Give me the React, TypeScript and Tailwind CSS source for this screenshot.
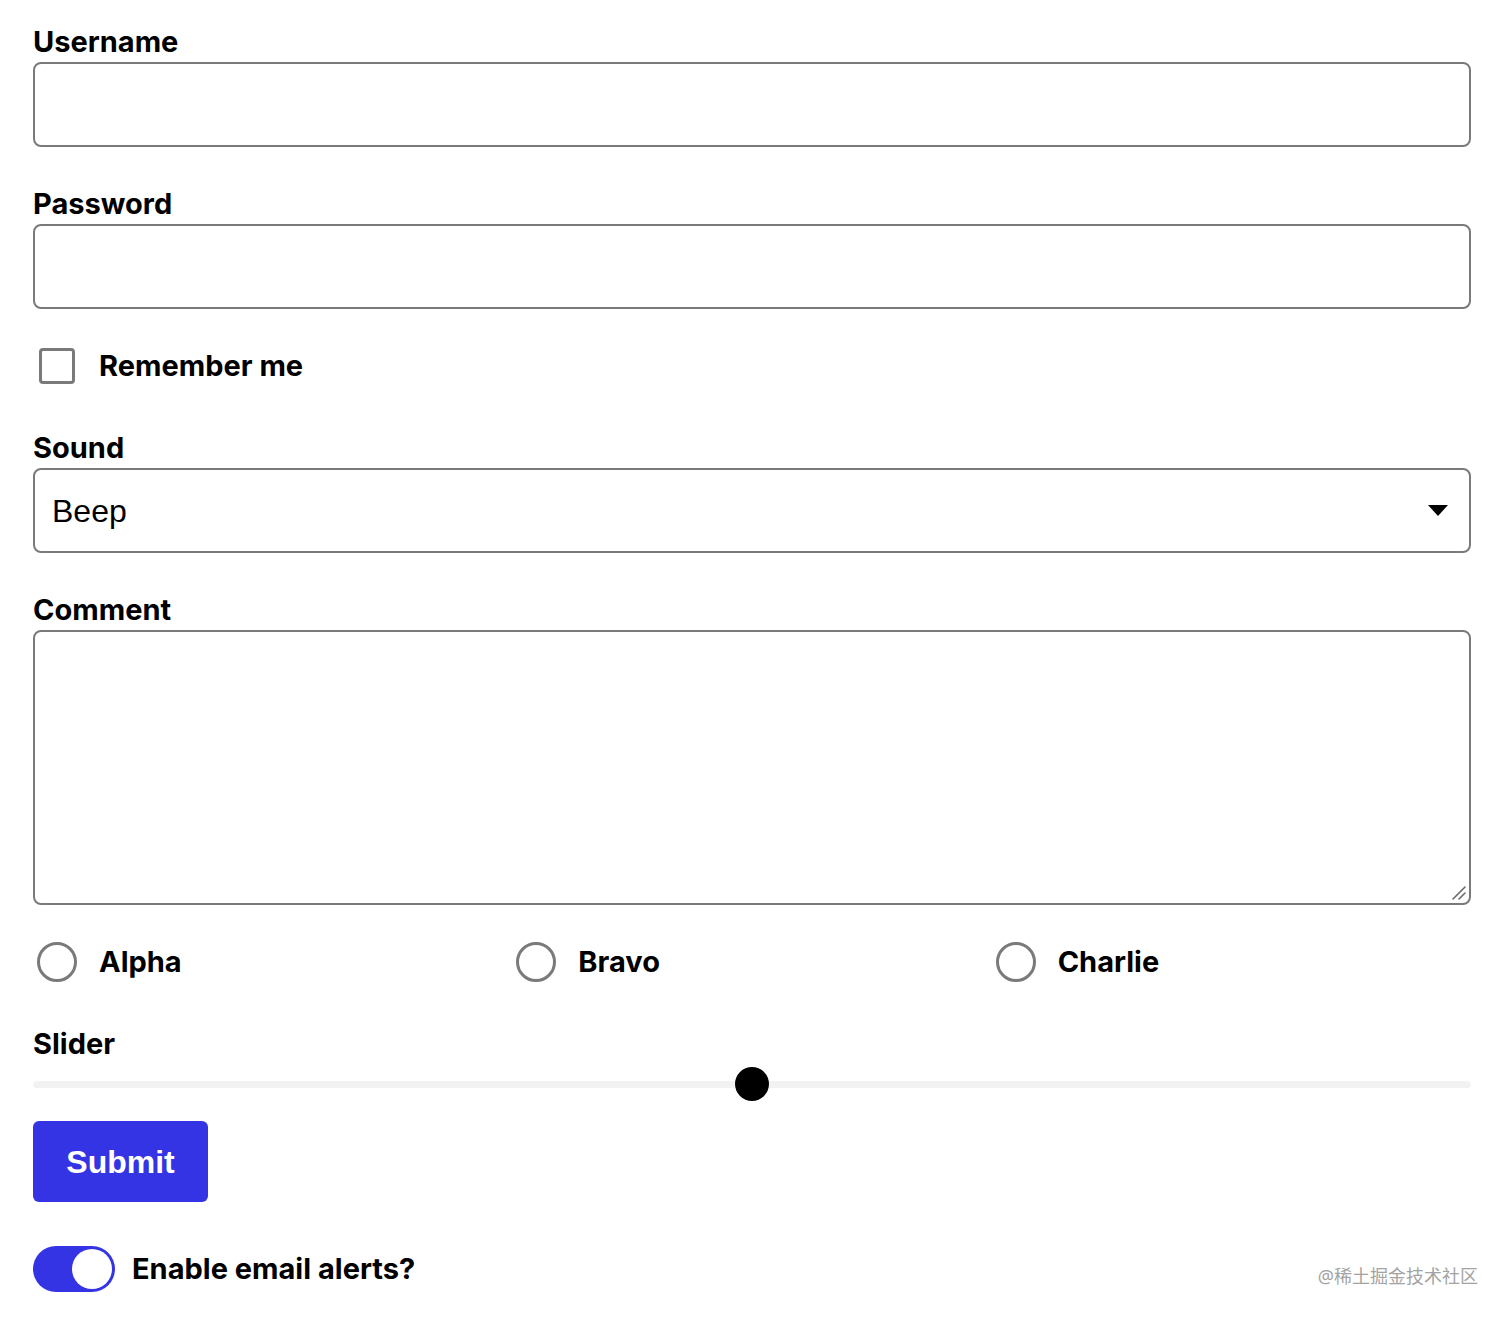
import React from "react";

const labelCls =
  "block text-[29px] leading-[34px] font-bold text-black mb-[3px] [font-family:Inter,'Noto_Sans',sans-serif]";

export default function App() {
  return (
    <div className="relative min-h-[1319px] bg-white pl-[33px] pr-[41px] pt-[25px] [font-family:Inter,'Noto_Sans',sans-serif] text-black">
      <div>
        <label className={labelCls}>Username</label>
        <input
          type="text"
          className="block w-full h-[85px] border-2 border-[#7a7a7a] rounded-[8px] bg-white outline-none"
        />
      </div>

      <div className="mt-[40px]">
        <label className={labelCls}>Password</label>
        <input
          type="password"
          className="block w-full h-[85px] border-2 border-[#7a7a7a] rounded-[8px] bg-white outline-none"
        />
      </div>

      <div className="mt-[39px] flex items-center h-[36px]">
        <div className="ml-[6px] w-[36px] h-[36px] border-[3px] border-[#7a7a7a] rounded-[4px] bg-white" />
        <span className="ml-[24px] text-[29px] leading-[34px] font-bold">Remember me</span>
      </div>

      <div className="mt-[47px]">
        <label className={labelCls}>Sound</label>
        <div className="relative">
          <select
            defaultValue="Beep"
            className="block w-full h-[85px] appearance-none border-2 border-[#7a7a7a] rounded-[8px] bg-white pl-[17px] text-[32px] text-black outline-none [font-family:'Liberation_Sans',Arial,sans-serif]"
          >
            <option>Beep</option>
            <option>Boop</option>
          </select>
          <svg
            className="absolute right-[23px] top-[37px] pointer-events-none"
            width="20"
            height="11"
            viewBox="0 0 20 11"
          >
            <path d="M0 0 H20 L10 11 Z" fill="#000" />
          </svg>
        </div>
      </div>

      <div className="mt-[40px]">
        <label className={labelCls}>Comment</label>
        <div className="relative">
          <textarea className="block w-full h-[275px] resize-none border-2 border-[#7a7a7a] rounded-[8px] bg-white outline-none" />
          <svg
            className="absolute right-[4px] bottom-[4px] pointer-events-none"
            width="16"
            height="16"
            viewBox="0 0 16 16"
          >
            <path d="M2 14 L14 2 M8 14 L14 8" stroke="#6b6b6b" strokeWidth="1.6" strokeLinecap="round" fill="none" />
          </svg>
        </div>
      </div>

      <div className="mt-[37px] grid grid-cols-3 h-[40px]">
        {["Alpha", "Bravo", "Charlie"].map((n) => (
          <div key={n} className="flex items-center">
            <div className="ml-[4px] w-[40px] h-[40px] rounded-full border-[3px] border-[#7a7a7a] bg-white" />
            <span className="ml-[22px] text-[29px] leading-[34px] font-bold">{n}</span>
          </div>
        ))}
      </div>

      <div className="mt-[45px]">
        <label className={labelCls}>Slider</label>
        <div className="relative mt-[6px] h-[34px] flex items-center">
          <div className="w-full h-[7px] rounded-full bg-[#f2f2f2]" />
          <div className="absolute left-[calc(50%-17px)] top-0 w-[34px] h-[34px] rounded-full bg-black" />
        </div>
      </div>

      <button className="mt-[20px] block w-[175px] h-[81px] rounded-[6px] bg-[#3434e4] text-white text-[32px] font-bold [font-family:'Liberation_Sans',Arial,sans-serif]">
        Submit
      </button>

      <div className="mt-[44px] flex items-center">
        <div className="w-[82px] h-[46px] rounded-full bg-[#3434e4] p-[3px] flex justify-end">
          <div className="w-[40px] h-[40px] rounded-full bg-white" />
        </div>
        <span className="ml-[17px] text-[29px] leading-[34px] font-bold">Enable email alerts?</span>
      </div>

      <div className="absolute right-[34px] bottom-[31px] text-[18px] leading-[24px] text-[#a3a3a3] [font-family:'Noto_Sans','Noto_Sans_CJK_SC',sans-serif]">
        @稀土掘金技术社区
      </div>
    </div>
  );
}
